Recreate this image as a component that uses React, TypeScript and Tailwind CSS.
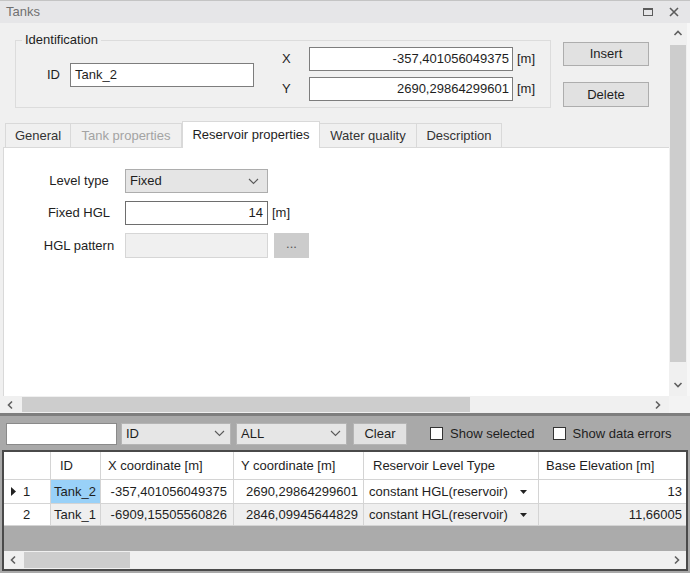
import React from "react";

const FONT = "font-['Liberation_Sans',Arial,sans-serif]";

function Chev({ dir, className = "" }: { dir: "up" | "down" | "left" | "right"; className?: string }) {
  const d = {
    up: "M1.5 6 L5 2.5 L8.5 6",
    down: "M1.5 3 L5 6.5 L8.5 3",
    left: "M6 1.5 L2.5 5 L6 8.5",
    right: "M3 1.5 L6.5 5 L3 8.5",
  }[dir];
  return (
    <svg width="10" height="10" viewBox="0 0 10 10" className={className}>
      <path d={d} fill="none" stroke="#606060" strokeWidth="1.6" />
    </svg>
  );
}

function SelectChevron() {
  return (
    <svg width="11" height="7" viewBox="0 0 11 7">
      <path d="M1 1 L5.5 5.5 L10 1" fill="none" stroke="#5a5a5a" strokeWidth="1.1" />
    </svg>
  );
}

function ComboBox({ value, width }: { value: string; width: string }) {
  return (
    <div
      className={`${width} h-[24px] flex items-center justify-between pl-[4px] pr-[8px] bg-[#e5e5e5] border border-[#adadad]`}
    >
      <span>{value}</span>
      <SelectChevron />
    </div>
  );
}

const tabs = [
  { label: "General", w: "w-[66px]" },
  { label: "Tank properties", w: "w-[111px]", disabled: true },
  { label: "Reservoir properties", w: "w-[138px]", active: true },
  { label: "Water quality", w: "w-[97px]" },
  { label: "Description", w: "w-[85px]" },
];

const rows = [
  {
    n: "1",
    id: "Tank_2",
    x: "-357,401056049375",
    y: "2690,29864299601",
    type: "constant HGL(reservoir)",
    elev: "13",
    current: true,
  },
  {
    n: "2",
    id: "Tank_1",
    x: "-6909,15505560826",
    y: "2846,09945644829",
    type: "constant HGL(reservoir)",
    elev: "11,66005",
  },
];

export default function App() {
  return (
    <div
      className={`${FONT} w-[690px] h-[573px] overflow-hidden flex flex-col bg-[#f0f0f0] text-[13px] text-[#1e1e1e]`}
    >
      {/* title bar */}
      <div className="h-[23px] shrink-0 flex items-center justify-between bg-[#e6e6e8] border-t border-[#c4c4c4] pl-[6px] pr-[11px]">
        <span className="text-[#707070]">Tanks</span>
        <div className="flex items-center gap-[16px]">
          <div className="w-[10px] h-[8px] border border-[#5c5c5c] border-t-2" />
          <svg width="10" height="10" viewBox="0 0 10 10">
            <path d="M1 1 L9 9 M9 1 L1 9" stroke="#5c5c5c" strokeWidth="1.6" />
          </svg>
        </div>
      </div>

      {/* upper part: editor + vertical scrollbar */}
      <div className="h-[373px] shrink-0 flex">
        <div className="w-[669px] flex flex-col">
          <div className="flex items-start pt-[17px] pl-[15px]">
            <div className="relative w-[536px] h-[68px] border border-[#dcdcdc] flex items-center">
              <span className="absolute -top-[9px] left-[6px] px-[3px] bg-[#f0f0f0] leading-[16px]">
                Identification
              </span>
              <span className="ml-[31px] mt-[1px]">ID</span>
              <div className="ml-[10px] mt-[1px] w-[184px] h-[24px] bg-white border border-[#7d7d7d] flex items-center pl-[4px]">
                Tank_2
              </div>
              <div className="ml-[28px] grid grid-cols-[27px_204px_auto] items-center gap-y-[6px]">
                <span>X</span>
                <div className="h-[24px] bg-white border border-[#7d7d7d] flex items-center justify-end pr-[3px]">
                  -357,401056049375
                </div>
                <span className="ml-[4px]">[m]</span>
                <span>Y</span>
                <div className="h-[24px] bg-white border border-[#7d7d7d] flex items-center justify-end pr-[3px]">
                  2690,29864299601
                </div>
                <span className="ml-[4px]">[m]</span>
              </div>
            </div>
            <div className="ml-[12px] mt-[2px] flex flex-col gap-[16px]">
              <div className="w-[86px] h-[24px] flex items-center justify-center bg-[#e1e1e1] border border-[#adadad]">
                Insert
              </div>
              <div className="w-[86px] h-[25px] flex items-center justify-center bg-[#e1e1e1] border border-[#adadad]">
                Delete
              </div>
            </div>
          </div>

          {/* tabs */}
          <div className="mt-[13px] h-[26px] flex items-end pl-[5px] relative z-10">
            {tabs.map((t, i) =>
              t.active ? (
                <div
                  key={t.label}
                  className={`${t.w} h-[27px] -mb-px flex items-center justify-center bg-white border border-b-0 border-[#d9d9d9]`}
                >
                  {t.label}
                </div>
              ) : (
                <div
                  key={t.label}
                  className={`${t.w} h-[24px] flex items-center justify-center bg-[#f0f0f0] border-t border-r border-[#d9d9d9] ${
                    i === 0 ? "border-l" : ""
                  } ${t.disabled ? "text-[#a3a3a3]" : "text-[#333]"}`}
                >
                  {t.label}
                </div>
              )
            )}
          </div>

          {/* tab page */}
          <div className="flex-1 ml-[3px] bg-white border-t border-l border-[#d9d9d9] pt-[21px] pl-[35px]">
            <div className="grid grid-cols-[80px_143px_auto] items-center gap-x-[6px] gap-y-[8px]">
              <span className="text-center">Level type</span>
              <ComboBox value="Fixed" width="w-[143px]" />
              <span />
              <span className="text-center">Fixed HGL</span>
              <div className="h-[24px] bg-white border border-[#6e6e6e] flex items-center justify-end pr-[4px]">
                14
              </div>
              <span className="-ml-[2px]">[m]</span>
              <span className="text-center">HGL pattern</span>
              <div className="h-[25px] bg-[#f0f0f0] border border-[#d6d6d6]" />
              <div className="w-[35px] h-[25px] flex items-center justify-center bg-[#cccccc] text-[#555] pb-[4px]">
                ...
              </div>
            </div>
          </div>
        </div>

        {/* vertical scrollbar */}
        <div className="w-[18px] flex flex-col items-center bg-[#f0f0f0]">
          <div className="h-[22px] flex items-center justify-center">
            <Chev dir="up" />
          </div>
          <div className="w-[16px] h-[317px] bg-[#cdcdcd]" />
          <div className="flex-1 flex items-end justify-center pb-[6px]">
            <Chev dir="down" />
          </div>
        </div>
        <div className="w-[3px] bg-[#f7f7f7]" />
      </div>

      {/* horizontal scrollbar */}
      <div className="h-[17px] shrink-0 flex">
        <div className="w-[669px] flex items-center bg-[#f0f0f0]">
          <div className="w-[22px] flex justify-center">
            <Chev dir="left" />
          </div>
          <div className="w-[448px] h-[15px] bg-[#cdcdcd]" />
          <div className="flex-1 flex justify-end pr-[6px]">
            <Chev dir="right" />
          </div>
        </div>
        <div className="flex-1 bg-[#f3f3f3]" />
      </div>

      <div className="h-[3px] shrink-0 bg-[#7e7e7e]" />

      {/* lower part: filter + grid */}
      <div className="flex-1 flex flex-col bg-[#a9a9a9]">
        <div className="h-[34px] shrink-0 flex items-center pl-[6px] pt-[1px]">
          <div className="w-[111px] h-[22px] bg-white border border-[#8a8a8a]" />
          <div className="ml-[4px] w-[110px] h-[22px] flex items-center justify-between pl-[4px] pr-[5px] bg-[#e6e6e6] border border-[#b5b5b5]">
            <span>ID</span>
            <SelectChevron />
          </div>
          <div className="ml-[5px] w-[111px] h-[22px] flex items-center justify-between pl-[4px] pr-[5px] bg-[#e6e6e6] border border-[#b5b5b5]">
            <span>ALL</span>
            <SelectChevron />
          </div>
          <div className="ml-[6px] w-[54px] h-[22px] flex items-center justify-center bg-[#e1e1e1] border border-[#b5b5b5]">
            Clear
          </div>
          <div className="ml-[23px] w-[13px] h-[13px] bg-white border border-[#333]" />
          <span className="ml-[7px]">Show selected</span>
          <div className="ml-[18px] w-[13px] h-[13px] bg-white border border-[#333]" />
          <span className="ml-[7px]">Show data errors</span>
        </div>

        <div className="ml-[2px] w-[686px] h-[121px] flex flex-col border-2 border-[#4a4a4a] bg-[#ababab]">
          <div className="h-[28px] flex bg-white border-b border-[#d4d4d4]">
            <div className="w-[47px] border-r border-[#d4d4d4]" />
            <div className="w-[50px] border-r border-[#d4d4d4] flex items-center pl-[9px]">ID</div>
            <div className="w-[133px] border-r border-[#d4d4d4] flex items-center pl-[7px]">
              X coordinate [m]
            </div>
            <div className="w-[130px] border-r border-[#d4d4d4] flex items-center pl-[7px]">
              Y coordinate [m]
            </div>
            <div className="w-[175px] border-r border-[#d4d4d4] flex items-center pl-[9px]">
              Reservoir Level Type
            </div>
            <div className="flex-1 flex items-center pl-[7px]">Base Elevation [m]</div>
          </div>
          {rows.map((r) => (
            <div
              key={r.n}
              className={`flex border-b border-[#d4d4d4] ${r.current ? "h-[24px]" : "h-[22px]"} ${
                r.current ? "bg-white" : "bg-[#efefef]"
              }`}
            >
              <div className="w-[47px] bg-white border-r border-[#d4d4d4] flex items-center pl-[7px]">
                <span className="w-[12px] flex">
                  {r.current && (
                    <svg width="5" height="9" viewBox="0 0 5 9">
                      <path d="M0 0 L5 4.5 L0 9 Z" fill="#222" />
                    </svg>
                  )}
                </span>
                <span>{r.n}</span>
              </div>
              <div
                className={`w-[50px] border-r border-[#d4d4d4] flex items-center pl-[3px] ${
                  r.current ? "bg-[#99d1f8]" : ""
                }`}
              >
                {r.id}
              </div>
              <div className="w-[133px] border-r border-[#d4d4d4] flex items-center justify-end pr-[6px]">
                {r.x}
              </div>
              <div className="w-[130px] border-r border-[#d4d4d4] flex items-center justify-end pr-[5px]">
                {r.y}
              </div>
              <div className="w-[175px] border-r border-[#d4d4d4] flex items-center justify-between pl-[5px] pr-[11px]">
                <span>{r.type}</span>
                <svg width="7" height="4" viewBox="0 0 7 4">
                  <path d="M0 0 L7 0 L3.5 4 Z" fill="#222" />
                </svg>
              </div>
              <div className="flex-1 flex items-center justify-end pr-[4px]">{r.elev}</div>
            </div>
          ))}
          <div className="flex-1" />
          <div className="h-[18px] flex items-center bg-[#f0f0f0]">
            <div className="w-[20px] flex justify-center">
              <Chev dir="left" />
            </div>
            <div className="w-[106px] h-[16px] bg-[#cdcdcd]" />
            <div className="flex-1 flex justify-end pr-[4px]">
              <Chev dir="right" />
            </div>
          </div>
        </div>
      </div>
    </div>
  );
}
